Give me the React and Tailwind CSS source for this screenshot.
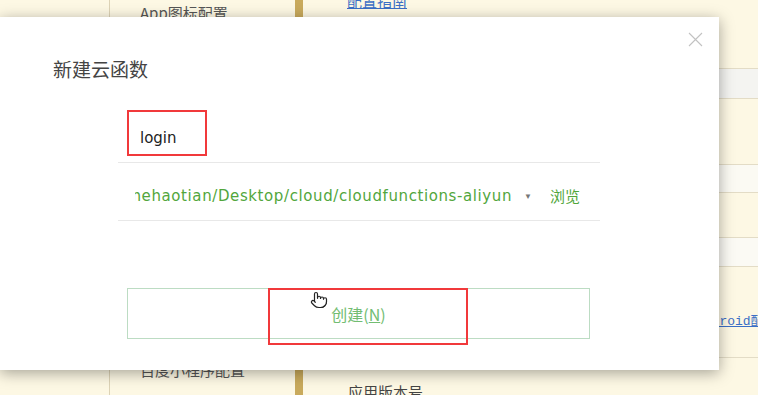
import React from 'react';
import { Pointer } from 'lucide-react';

const cjk = { fontFamily: '"Noto Sans CJK SC", "Noto Sans", sans-serif' };
const latin = { fontFamily: '"DejaVu Sans", "Noto Sans CJK SC", sans-serif' };

const Background = () => (
    <div className="flex h-full w-full bg-[#fdf8e4]">
        {/* left gutter */}
        <div className="w-[110px] shrink-0 border-r border-[#ddd3b6]" />

        {/* menu column */}
        <div className="w-[185px] shrink-0 flex flex-col justify-between text-[15px] text-[#555] pl-[30px]" style={cjk}>
            <div className="mt-[2px]">App图标配置</div>
            <div className="mb-[14px]">百度小程序配置</div>
        </div>

        {/* golden bar */}
        <div className="w-[8px] shrink-0 bg-[#c9aa5c]" />

        {/* content rows */}
        <div className="flex-1 flex flex-col overflow-hidden">
            <div className="h-[69px] shrink-0 border-b border-[#e3dcc6] pl-[44px]">
                <span className="-mt-[10px] block text-[15px] text-[#3b6fc6] underline" style={cjk}>配置指南</span>
            </div>
            <div className="h-[30px] shrink-0 border-b border-[#e3dcc6] bg-[#f4f4f1]" />
            <div className="h-[66px] shrink-0 border-b border-[#e3dcc6]" />
            <div className="h-[28px] shrink-0 border-b border-[#e3dcc6] bg-[#fbfaf3]" />
            <div className="h-[45px] shrink-0 border-b border-[#e3dcc6]" />
            <div className="h-[29px] shrink-0 border-b border-[#e3dcc6] bg-[#fbfaf4]" />
            <div className="h-[91px] shrink-0 border-b border-[#e3dcc6] flex items-end pb-[26px] pl-[393px]">
                <span className="text-[13px] text-[#3b6fc6] underline whitespace-nowrap" style={{ fontFamily: '"Liberation Mono", "Noto Sans CJK SC", monospace' }}>Android配置</span>
            </div>
            <div className="shrink-0 pl-[45px] pt-[22px]">
                <span className="text-[15px] text-[#444]" style={cjk}>应用版本号</span>
            </div>
        </div>
    </div>
);

const Dialog = () => (
    <div className="absolute left-0 top-[17px] w-[719px] h-[353px] bg-white shadow-[0_3px_14px_rgba(0,0,0,0.35)]">
        {/* close */}
        <button className="absolute right-[16px] top-[15px] h-[15px] w-[15px]">
            <svg viewBox="0 0 15 15" className="h-[15px] w-[15px]">
                <path d="M1 1 L14 14 M14 1 L1 14" stroke="#c2c2c2" strokeWidth="1.1" />
            </svg>
        </button>

        <h2 className="pl-[53px] pt-[39px] text-[19px] leading-[26px] text-[#444]" style={cjk}>新建云函数</h2>

        <div className="ml-[118px] w-[482px] mt-[29px]">
            {/* name row */}
            <div className="relative h-[52px] border-b border-[#e8e8e8]">
                <div className="pl-[22px] pt-[17px] text-[15px] leading-[20px] text-[#222]" style={latin}>login</div>
                <div className="absolute left-[9px] top-[-1px] h-[46px] w-[80px] border-2 border-[#f1393b]" />
            </div>

            {/* path row */}
            <div className="flex items-center h-[58px] border-b border-[#e8e8e8] pl-[17px] pr-[20px] pt-[9px]">
                <div className="flex-1 overflow-hidden flex justify-end">
                    <span className="whitespace-nowrap text-[15px] tracking-[0.6px] text-[#52a63c]" style={latin}>/Users/mehaotian/Desktop/cloud/cloudfunctions-aliyun</span>
                </div>
                <span className="ml-[12px] mr-[18px] text-[8px] text-[#777]">▼</span>
                <span className="text-[15px] text-[#52a63c]" style={cjk}>浏览</span>
            </div>

            {/* create button */}
            <div className="relative mt-[67px] ml-[9px] w-[463px]">
                <div className="flex h-[51px] items-center justify-center border border-[#bcdcc3] text-[16px] text-[#72bd72]" style={cjk}>
                    <span className="mt-[1px]">创建(<span className="underline">N</span>)</span>
                </div>
                <div className="absolute left-[141px] top-0 h-[57px] w-[200px] border-2 border-[#f1393b]" />
                <Pointer className="absolute left-[183px] top-[3px] h-[18px] w-[18px] text-[#222]" fill="white" strokeWidth={1.6} />
            </div>
        </div>
    </div>
);

export default function App() {
    return (
        <div className="relative w-[758px] h-[395px] overflow-hidden">
            <Background />
            <Dialog />
        </div>
    );
}
